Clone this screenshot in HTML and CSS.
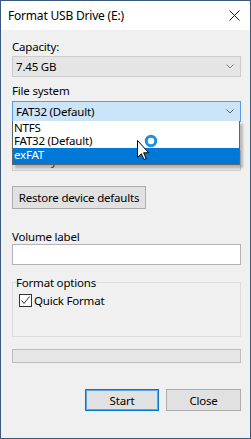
FILE: index.html
```html
<!DOCTYPE html>
<html lang="en">
<head>
  <meta charset="UTF-8">
  <title>Format USB Drive (E:)</title>
  <link rel="stylesheet" href="styles.css">
</head>
<body>
  <div class="window">
    <div class="titlebar">
      <span class="title">Format USB Drive (E:)</span>
      <svg class="close-x" width="11" height="11" viewBox="0 0 11 11">
        <path d="M0.5 0.5 L10.5 10.5 M10.5 0.5 L0.5 10.5" stroke="#1a1a1a" stroke-width="1" fill="none"/>
      </svg>
    </div>

    <div class="content">
      <div class="label cap-label">Capacity:</div>
      <div class="combo">
        <span>7.45 GB</span>
        <svg class="chev" width="8" height="5" viewBox="0 0 8 5"><path d="M0.5 0.5 L4 4 L7.5 0.5" stroke="#808080" fill="none"/></svg>
      </div>

      <div class="label fs-label">File system</div>
      <div class="combo active">
        <span>FAT32 (Default)</span>
        <svg class="chev" width="8" height="5" viewBox="0 0 8 5"><path d="M0.5 0.5 L4 4 L7.5 0.5" stroke="#606060" fill="none"/></svg>
      </div>

      <!-- covered by the open list -->
      <div class="label au-label">Allocation unit size</div>
      <div class="combo under">
        <span>4096 bytes</span>
      </div>

      <!-- open list of the file system combo -->
      <ul class="dropdown">
        <li>NTFS</li>
        <li>FAT32 (Default)</li>
        <li class="selected">exFAT</li>
      </ul>

      <button class="btn restore">Restore device defaults</button>

      <div class="label vol-label">Volume label</div>
      <div class="textbox"></div>

      <fieldset class="group">
        <legend>Format options</legend>
        <label class="check">
          <span class="box">
            <svg width="11" height="11" viewBox="0 0 11 11"><path d="M1.5 5.5 L4 8.5 L9.5 1.5" stroke="#333" stroke-width="1" fill="none"/></svg>
          </span>
          Quick Format
        </label>
      </fieldset>

      <div class="progress"></div>

      <div class="actions">
        <button class="btn default">Start</button>
        <button class="btn">Close</button>
      </div>

      <svg class="cursor" width="24" height="28" viewBox="0 0 24 28">
        <circle cx="14" cy="7" r="4.7" stroke="#1e8fe8" stroke-width="3" fill="none"/>
        <path d="M0.5 6.5 L0.5 23.5 L4.3 19.7 L7 25.5 L9.2 24.5 L6.6 18.8 L11.8 18.8 Z" fill="#fff" stroke="#000" stroke-width="1" stroke-linejoin="round"/>
      </svg>
    </div>
  </div>
</body>
</html>
```

FILE: styles.css
```css
* { box-sizing: border-box; }
body {
  margin: 0;
  font-family: 'Noto Sans', 'Open Sans', sans-serif;
  font-size: 11.5px;
  letter-spacing: -0.2px;
  color: #000;
}
.window {
  width: 251px;
  height: 439px;
  border: 1px solid #3b5a7b;
  background: #f0f0f0;
  display: flex;
  flex-direction: column;
}
.titlebar {
  height: 29px;
  background: #fff;
  display: flex;
  align-items: center;
  justify-content: space-between;
  padding: 0 10px 0 7px;
  flex-shrink: 0;
}
.title {
  font-size: 12px;
  line-height: 15px;
}
.content {
  position: relative;
  padding: 0 9px 0 11px;
  flex: 1;
}
.label {
  line-height: 15px;
  height: 15px;
}
.cap-label { margin-top: 9px; margin-bottom: 2px; }
.fs-label { margin-top: 6px; margin-bottom: 3px; }
.au-label { margin-top: 10px; margin-bottom: 3px; visibility: hidden; }
.vol-label { margin-top: 20px; margin-bottom: 0; }

.combo {
  height: 21px;
  border: 1px solid #cccccc;
  background: #e5e5e5;
  display: flex;
  align-items: center;
  justify-content: space-between;
  padding: 0 6px 0 3px;
  line-height: 15px;
}
.combo.active {
  background: #cce4f7;
  border-color: #569de5;
}
.combo.under { color: #333; }
.chev { display: block; }

.dropdown {
  position: absolute;
  top: 91px;
  left: 11px;
  width: 228px;
  margin: 0;
  padding: 0;
  list-style: none;
  background: #fff;
  border: 1px solid #646464;
  border-top: none;
  box-shadow: 3px 3px 2px rgba(0,0,0,0.22);
}
.dropdown li {
  height: 13px;
  line-height: 13px;
  padding-left: 1px;
}
.dropdown li.selected {
  height: 16px;
  background: #0078d7;
  color: #fff;
  margin-top: 1px;
}

.btn {
  font-family: inherit;
  font-size: 11.5px;
  letter-spacing: -0.2px;
  color: #000;
  background: #e1e1e1;
  border: 1px solid #adadad;
  height: 22px;
  padding: 0;
  line-height: 15px;
}
.restore {
  display: block;
  width: 134px;
  height: 23px;
  margin-top: 15px;
}
.textbox {
  height: 21px;
  background: #fff;
  border: 1px solid #b4b4b4;
}
.group {
  margin: 10px 0 0 0;
  padding: 3px 0 0 6px;
  height: 62px;
  border: 1px solid #dcdcdc;
  min-width: 0;
}
.group legend {
  padding: 0;
  margin-left: -3px;
  line-height: 15px;
}
.check {
  display: flex;
  align-items: center;
  gap: 2px;
  line-height: 15px;
}
.box {
  width: 13px;
  height: 13px;
  border: 1px solid #333;
  background: #fff;
  display: flex;
  align-items: center;
  justify-content: center;
}
.box svg { display: block; }
.progress {
  margin-top: 12px;
  height: 14px;
  border: 1px solid #bcbcbc;
  background: #e6e6e6;
}
.actions {
  margin-top: 26px;
  display: flex;
  justify-content: flex-end;
  gap: 7px;
}
.actions .btn { width: 74px; }
.actions .btn:last-child { width: 75px; }
.btn.default {
  border: 1px solid #0078d7;
  box-shadow: inset 0 0 0 1px #5ea6e6;
}
.cursor {
  position: absolute;
  left: 136px;
  top: 104px;
}
```
